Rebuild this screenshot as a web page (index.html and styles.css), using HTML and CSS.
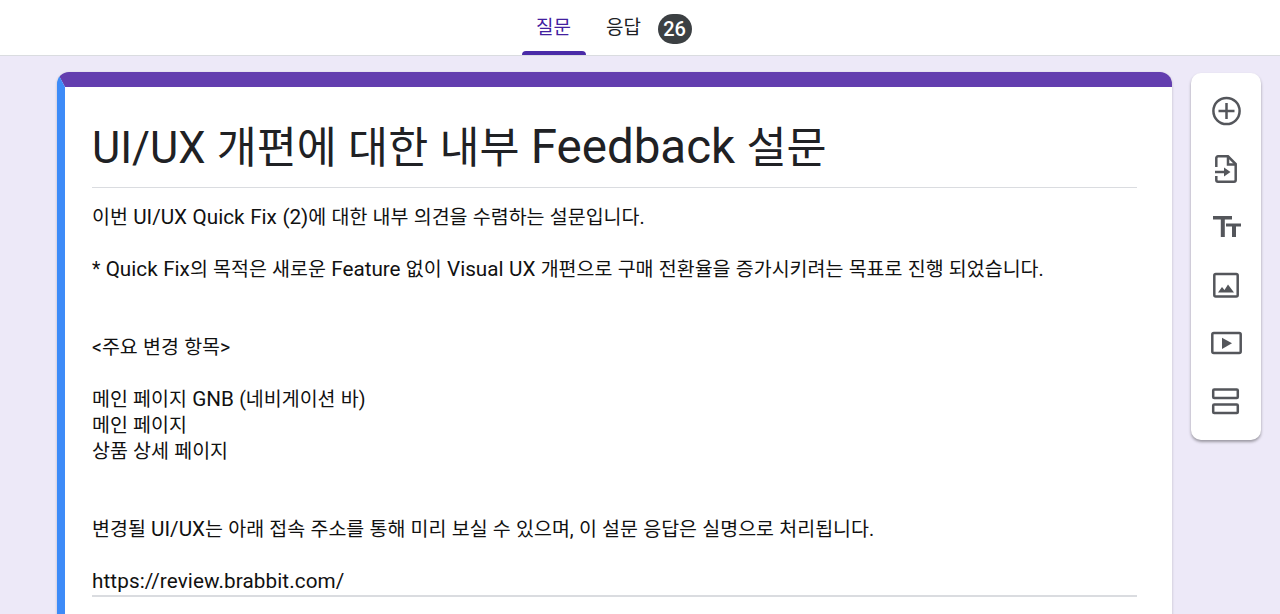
FILE: index.html
```html
<!doctype html>
<html lang="ko">
  <head>
    <meta charset="UTF-8" />
    <title>UI/UX 개편에 대한 내부 Feedback 설문</title>
    <link rel="stylesheet" href="styles.css">
  </head>
  <body>
    <header class="tabs">
      <div class="tab active">질문</div>
      <div class="tab">응답</div>
      <span class="badge">26</span>
    </header>

    <main class="editor">
      <section class="card">
        <h1>UI/UX 개편에 대한 내부 <span class="latin">Feedback</span> 설문</h1>
        <div class="description">
          <p>이번 <span class="en">UI/UX Quick Fix (2)</span>에 대한 내부 의견을 수렴하는 설문입니다.</p>
          <p class="gap">* <span class="en">Quick Fix</span>의 목적은 새로운 <span class="en">Feature</span> 없이 <span class="en">Visual UX</span> 개편으로 구매 전환율을 증가시키려는 목표로 진행 되었습니다.</p>
          <p class="gap-double">&lt;주요 변경 항목&gt;</p>
          <p class="gap">메인 페이지 <span class="en">GNB</span> (네비게이션 바)</p>
          <p>메인 페이지</p>
          <p>상품 상세 페이지</p>
          <p class="gap-double">변경될 <span class="en">UI/UX</span>는 아래 접속 주소를 통해 미리 보실 수 있으며, 이 설문 응답은 실명으로 처리됩니다.</p>
          <p class="gap"><span class="en link">https://review.brabbit.com/</span></p>
        </div>
      </section>

      <aside class="toolbar">
        <svg viewBox="0 0 32 32"><circle cx="16.500" cy="15" r="13.100" class="line"/><path d="M16.500 7v16M8.500 15h16" class="line"/></svg>
        <svg viewBox="0 0 32 32"><path d="M6.300 13V4A1.700 1.700 0 0 1 8 2.300H18L25.700 10V26A1.700 1.700 0 0 1 24 27.700H8A1.700 1.700 0 0 1 6.300 26V22" class="line"/><path d="M18 2.500V10.500H25.500" class="line"/><path d="M5 18h10" class="line"/><path d="M14 13.500l6.500 4.500-6.500 4.500z" class="fill"/></svg>
        <svg viewBox="0 0 32 32"><path d="M3 4h19v3.500h-7.200V25h-4V7.500H3z" class="fill"/><path d="M16 11.500h15v3h-5V25h-4V14.500h-6z" class="fill"/></svg>
        <svg viewBox="0 0 32 32"><rect x="4.300" y="4" width="23.400" height="22.400" rx="1.500" class="line"/><path d="M8 22.500l4-5.500 2.500 3 3.500-5.500 6 8z" class="fill"/></svg>
        <svg viewBox="0 0 32 32"><rect x="2.300" y="5" width="28.400" height="20" rx="1.500" class="line"/><path d="M12 9.700l10 5.600-10 5.700z" class="fill"/></svg>
        <svg viewBox="0 0 32 32"><rect x="3.200" y="3.500" width="24.600" height="8.400" rx="1" class="line"/><rect x="3.200" y="18.500" width="24.600" height="8.400" rx="1" class="line"/></svg>
      </aside>
    </main>
  </body>
</html>
```

FILE: styles.css
```css
* {
  margin: 0;
  padding: 0;
  box-sizing: border-box;
  font-family: 'Roboto', 'Noto Sans CJK KR', sans-serif;
}

html,
body {
  height: 100%;
  overflow: hidden;
}

body {
  background-color: #ede9f8;
  color: #202124;
}

.tabs {
  height: 56px;
  background-color: white;
  border-bottom: 1px solid #dadce0;
  display: flex;
  justify-content: center;
  padding-right: 67px;
}

.tab {
  width: 64px;
  height: 55px;
  margin-right: 6px;
  padding-top: 15px;
  font-size: 19px;
  line-height: 26px;
  text-align: center;
  color: #202124;
}

.tab.active {
  color: #42209f;
  position: relative;
}

.tab.active::after {
  content: '';
  position: absolute;
  left: 0;
  right: 0;
  bottom: 0;
  height: 4px;
  background-color: #4a2ba8;
  border-radius: 4px 4px 0 0;
}

.badge {
  width: 34px;
  height: 30px;
  margin-top: 14px;
  margin-left: -4px;
  border-radius: 15px;
  background-color: #3c4043;
  color: white;
  font-size: 20px;
  font-weight: 500;
  line-height: 30px;
  text-align: center;
}

.editor {
  display: flex;
  align-items: flex-start;
  gap: 19px;
  padding: 16px 0 0 57px;
}

.card {
  width: 1115px;
  height: 560px;
  flex-shrink: 0;
  background-color: white;
  border-top: 15px solid #633eaf;
  border-left: 8px solid #3d8bf8;
  border-radius: 12px 12px 0 0;
  box-shadow: 0 1px 3px rgba(0, 0, 0, 0.2);
  padding: 0 35px 0 27px;
}

.card h1 {
  height: 101px;
  padding-top: 29px;
  font-size: 43.500px;
  line-height: 66px;
  font-weight: 400;
  word-spacing: 0.500px;
  border-bottom: 1px solid #dadce0;
  white-space: nowrap;
}

.card h1 .latin {
  font-size: 47.500px;
  line-height: 1;
}

.description {
  padding-top: 17px;
  font-size: 19.500px;
  line-height: 26px;
  word-spacing: 0.400px;
  color: #111;
  border-bottom: 2px solid #dadce0;
}

.description .gap {
  margin-top: 26px;
}

.description .gap-double {
  margin-top: 52px;
}

.description .en {
  font-size: 20.700px;
  line-height: 1;
}

.description .link {
  letter-spacing: 0.100px;
}

.toolbar {
  width: 70px;
  height: 367px;
  margin-top: 1px;
  background-color: white;
  border-radius: 10px;
  box-shadow: 0 2px 3px rgba(0, 0, 0, 0.35);
  display: flex;
  flex-direction: column;
  align-items: center;
  gap: 26px;
  padding-top: 23px;
}

.toolbar svg {
  width: 32px;
  height: 32px;
}

.line {
  fill: none;
  stroke: #54565b;
  stroke-width: 2.500;
}

.fill {
  fill: #54565b;
}
```
